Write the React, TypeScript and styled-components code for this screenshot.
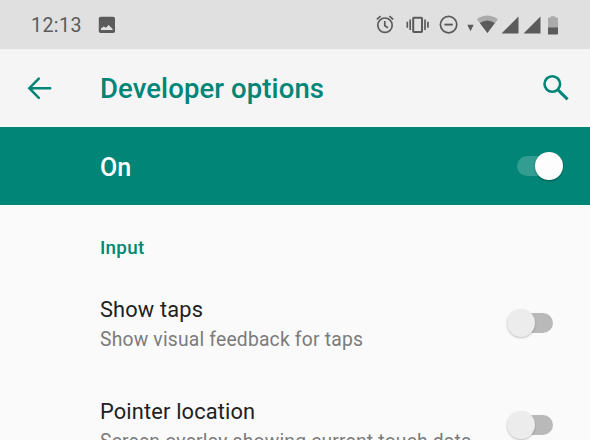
import React from 'react';
import styled, { createGlobalStyle } from 'styled-components';

const TEAL = '#018577';
const INK = '#5b5b5b';

const GlobalStyle = createGlobalStyle`
  * { box-sizing: border-box; }
  html, body { margin: 0; overflow: hidden; background: #fafafa; }
  body { font-family: Roboto, "Noto Sans", sans-serif; }
`;

const Screen = styled.main`
  display: flex;
  flex-direction: column;
  width: 590px;
  height: 440px;
  overflow: hidden;
  background: #fafafa;
`;

const StatusBar = styled.header`
  display: flex;
  align-items: center;
  flex: none;
  height: 49px;
  padding: 0 31px;
  background: #e0e0e0;
`;

const Clock = styled.span`
  width: 67px;
  color: ${INK};
  font-size: 19.6px;
  line-height: 24px;
  letter-spacing: 0.4px;
  padding-top: 2px;
`;

const StatusIcons = styled.div`
  display: flex;
  align-items: center;
  margin-left: auto;
`;

const Glyph = styled.svg<{ $gap?: number }>`
  display: block;
  flex: none;
  margin-left: ${({ $gap = 0 }) => $gap}px;
`;

const Toolbar = styled.div`
  display: flex;
  align-items: center;
  flex: none;
  height: 78px;
  padding: 0 18px 0 24px;
  background: #f5f5f5;
`;

const IconButton = styled.button`
  display: flex;
  padding: 0;
  border: 0;
  background: none;
  color: ${TEAL};
`;

const Title = styled.h1`
  flex: 1;
  margin: 0 0 0 44px;
  color: ${TEAL};
  font-size: 27.5px;
  font-weight: 500;
  line-height: 36px;
  letter-spacing: 0.1px;
  white-space: nowrap;
  padding-top: 2px;
`;

const Banner = styled.section`
  display: flex;
  align-items: center;
  justify-content: space-between;
  flex: none;
  height: 78px;
  padding: 0 27px 0 100px;
  background: ${TEAL};
  color: #fff;
`;

const BannerLabel = styled.span`
  padding-top: 3px;
  font-size: 25px;
  font-weight: 500;
  line-height: 32px;
`;

const Category = styled.h2`
  flex: none;
  height: 67px;
  margin: 0;
  padding: 31px 0 0 100px;
  color: ${TEAL};
  font-size: 18.8px;
  font-weight: 500;
  line-height: 24px;
  letter-spacing: 0.3px;
`;

const Preference = styled.section`
  display: flex;
  align-items: center;
  justify-content: space-between;
  flex: none;
  height: 102px;
  padding: 0 37px 0 100px;
`;

const PreferenceText = styled.div`
  display: flex;
  flex-direction: column;
  gap: 2px;
  padding-top: 2px;
`;

const PreferenceTitle = styled.div`
  color: #212121;
  font-size: 21.8px;
  line-height: 30px;
  letter-spacing: 0.16px;
`;

const Summary = styled.div`
  color: #7b7b7b;
  font-size: 19.3px;
  line-height: 26px;
  letter-spacing: 0.2px;
  white-space: nowrap;
`;

const Track = styled.span<{ $on?: boolean }>`
  display: flex;
  align-items: center;
  width: 46px;
  height: 28px;

  &::before {
    content: '';
    order: ${({ $on }) => ($on ? 0 : 1)};
    width: 30px;
    height: 20px;
    margin: ${({ $on }) => ($on ? '0 -12px 0 0' : '0 0 0 -12px')};
    border-radius: 10px;
    background: ${({ $on }) => ($on ? '#339d92' : '#b9b9b9')};
  }
`;

const Thumb = styled.span<{ $on?: boolean }>`
  z-index: 1;
  width: 28px;
  height: 28px;
  border-radius: 50%;
  background: ${({ $on }) => ($on ? '#fdfdfd' : '#ececec')};
  box-shadow: 0 1px 2px ${({ $on }) => ($on ? 'rgba(0,0,0,.35)' : 'rgba(0,0,0,.24)')};
`;

const Switch = ({ on }: { on?: boolean }) => (
  <Track $on={on} role="switch" aria-checked={!!on}>
    <Thumb $on={on} />
  </Track>
);

const PictureIcon = () => (
  <Glyph width="18" height="18" viewBox="0 0 18 18">
    <rect x="0.8" y="0.8" width="16.2" height="16.2" rx="1.8" fill={INK} />
    <path d="M3 14V12.6L5.7 10.4 8 11.8 10.6 9 14.6 13V14Z" fill="#e0e0e0" />
  </Glyph>
);

const AlarmIcon = () => (
  <Glyph width="20" height="20" viewBox="0 0 20 20" fill="none" stroke={INK} strokeWidth="1.7">
    <circle cx="10" cy="10.2" r="7.2" />
    <path d="M1.8 4.3 5.6 1.2M18.2 4.3 14.4 1.2M9.8 6v4.8l3.2 1.9" />
  </Glyph>
);

const VibrateIcon = () => (
  <Glyph $gap={11} width="24" height="20" viewBox="0 0 24 20" fill="none" stroke={INK}>
    <rect x="7.2" y="2.7" width="8.8" height="14.2" rx="0.6" strokeWidth="2" />
    <path d="M4.2 4.6v10.4M19 4.6v10.4M1.3 6.8v6M21.9 6.8v6" strokeWidth="1.7" />
  </Glyph>
);

const DisturbIcon = () => (
  <Glyph $gap={9} width="20" height="20" viewBox="0 0 20 20" fill="none" stroke={INK}>
    <circle cx="9.6" cy="9.6" r="8.2" strokeWidth="1.7" />
    <path d="M5.4 9.6h8.4" strokeWidth="1.9" />
  </Glyph>
);

const WifiIcon = () => (
  <Glyph $gap={8} width="32" height="20" viewBox="0 0 32 20">
    <path d="M.3 9.8h6.4L3.5 16.2Z" fill={INK} />
    <path d="M9.9 4.3Q20.4-3.2 30.9 4.3L20.4 18Z" fill="#ababab" />
    <path d="M12.9 8Q20.4 2.8 27.9 8L20.4 18Z" fill={INK} />
  </Glyph>
);

const SignalIcon = ({ gap }: { gap: number }) => (
  <Glyph $gap={gap} width="18" height="20" viewBox="0 0 18 20">
    <path d="M.5 18.6 17.5 1.6V18.6Z" fill={INK} />
  </Glyph>
);

const BatteryIcon = () => (
  <Glyph $gap={6} width="12" height="20" viewBox="0 0 12 20">
    <path d="M1 3.4q0-.8.8-.8H3.8V1.3H8.2V2.6h2q.8 0 .8.8V13H1Z" fill="#ababab" />
    <path d="M1 12.5h10v6.3q0 .6-.6.6H1.6q-.6 0-.6-.6Z" fill={INK} />
  </Glyph>
);

const BackIcon = () => (
  <Glyph width="32" height="32" viewBox="0 0 32 32" fill="none" stroke="currentColor" strokeWidth="2.5" strokeLinecap="round">
    <path d="M26.2 16.2H5.4M14.8 6.7 5.3 16.2 14.8 25.9" />
  </Glyph>
);

const SearchIcon = () => (
  <Glyph width="32" height="32" viewBox="0 0 32 32" fill="none" stroke="currentColor">
    <circle cx="12.3" cy="12" r="7.8" strokeWidth="2.6" />
    <path d="M17.8 17.8 27.6 27.4" strokeWidth="3" />
  </Glyph>
);

const preferences = [
  { title: 'Show taps', summary: 'Show visual feedback for taps' },
  { title: 'Pointer location', summary: 'Screen overlay showing current touch data' },
];

export default function App() {
  return (
    <Screen>
      <GlobalStyle />
      <StatusBar>
        <Clock>12:13</Clock>
        <PictureIcon />
        <StatusIcons>
          <AlarmIcon />
          <VibrateIcon />
          <DisturbIcon />
          <WifiIcon />
          <SignalIcon gap={2} />
          <SignalIcon gap={4} />
          <BatteryIcon />
        </StatusIcons>
      </StatusBar>
      <Toolbar>
        <IconButton aria-label="Back"><BackIcon /></IconButton>
        <Title>Developer options</Title>
        <IconButton aria-label="Search"><SearchIcon /></IconButton>
      </Toolbar>
      <Banner>
        <BannerLabel>On</BannerLabel>
        <Switch on />
      </Banner>
      <Category>Input</Category>
      {preferences.map(({ title, summary }) => (
        <Preference key={title}>
          <PreferenceText>
            <PreferenceTitle>{title}</PreferenceTitle>
            <Summary>{summary}</Summary>
          </PreferenceText>
          <Switch />
        </Preference>
      ))}
    </Screen>
  );
}
